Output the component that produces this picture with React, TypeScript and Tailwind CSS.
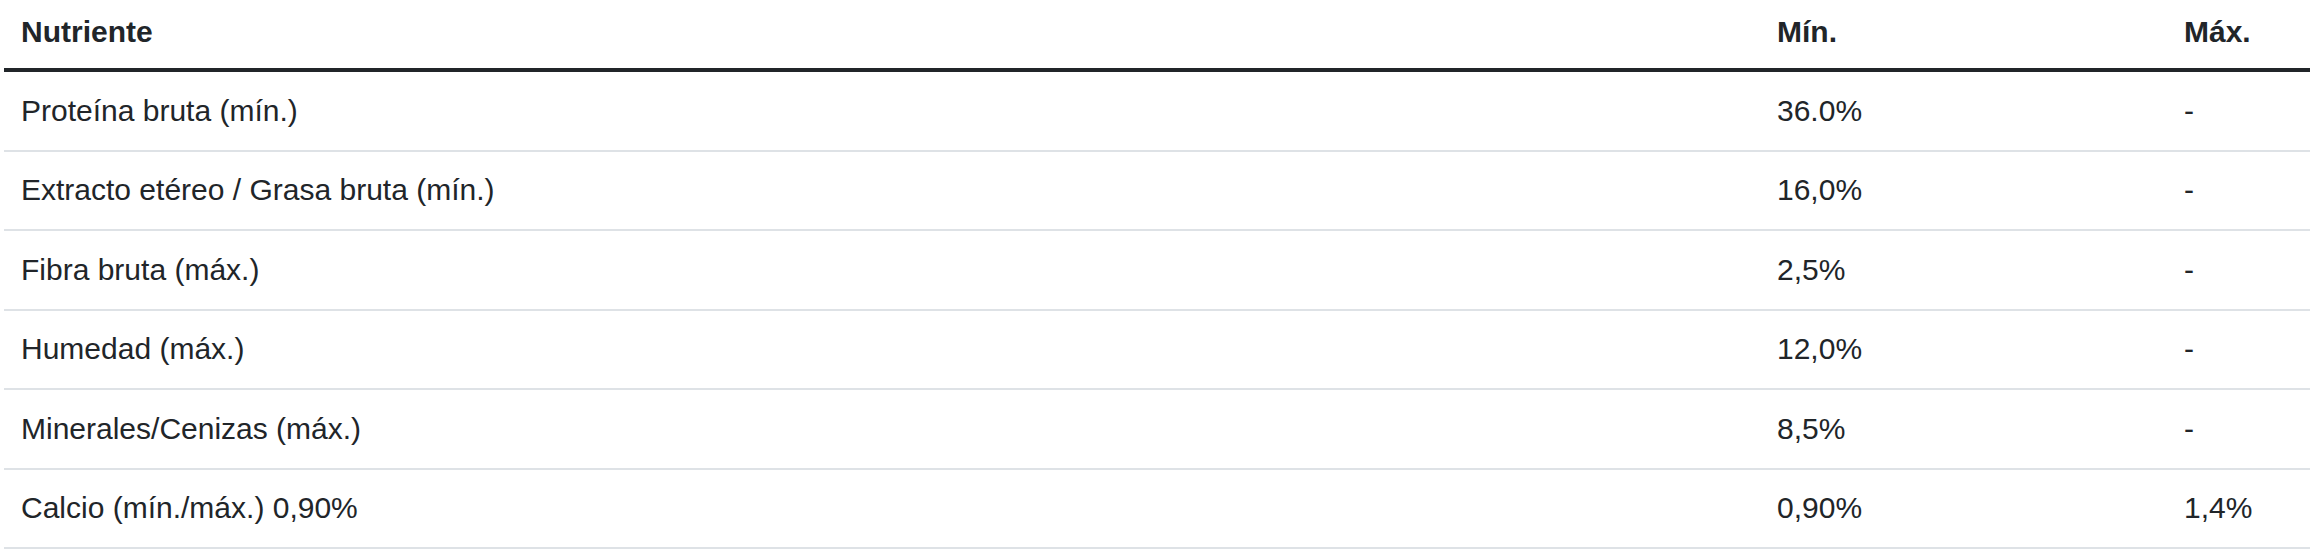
const rows = [
  { name: 'Proteína bruta (mín.)', min: '36.0%', max: '-' },
  { name: 'Extracto etéreo / Grasa bruta (mín.)', min: '16,0%', max: '-' },
  { name: 'Fibra bruta (máx.)', min: '2,5%', max: '-' },
  { name: 'Humedad (máx.)', min: '12,0%', max: '-' },
  { name: 'Minerales/Cenizas (máx.)', min: '8,5%', max: '-' },
  { name: 'Calcio (mín./máx.) 0,90%', min: '0,90%', max: '1,4%' },
];

export default function App() {
  return (
    <div className="bg-white w-[2310px] h-[560px] overflow-hidden pl-[4px] font-['Liberation_Sans','Helvetica_Neue',Arial,sans-serif] text-[#212529] text-[30px] leading-[44px]">
      <table className="w-full table-fixed border-collapse">
        <colgroup>
          <col className="w-[1756px]" />
          <col className="w-[407px]" />
          <col />
        </colgroup>
        <thead>
          <tr className="border-b-4 border-[#212529]">
            <th className="text-left font-bold pl-[17px] pt-[10px] pb-[14px]">Nutriente</th>
            <th className="text-left font-bold pl-[17px] pt-[10px] pb-[14px]">Mín.</th>
            <th className="text-left font-bold pl-[17px] pt-[10px] pb-[14px]">Máx.</th>
          </tr>
        </thead>
        <tbody>
          {rows.map((r) => (
            <tr key={r.name} className="border-b-2 border-[#dee2e6]">
              <td className="pl-[17px] py-[16.75px]">{r.name}</td>
              <td className="pl-[17px] py-[16.75px]">{r.min}</td>
              <td className="pl-[17px] py-[16.75px]">{r.max}</td>
            </tr>
          ))}
        </tbody>
      </table>
    </div>
  );
}
